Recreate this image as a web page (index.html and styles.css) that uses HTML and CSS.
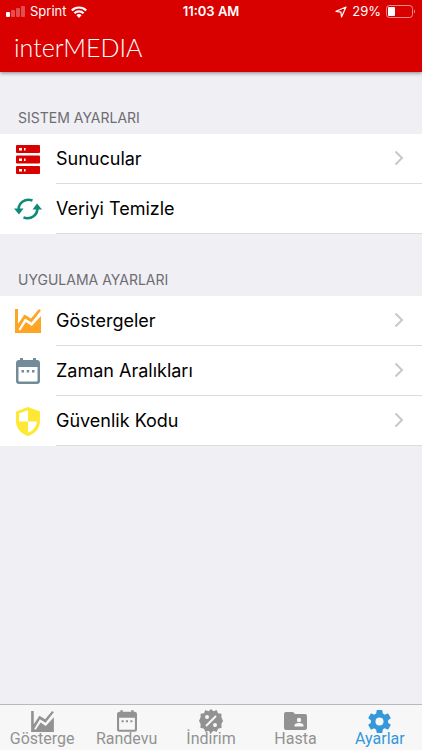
FILE: index.html
```html
<!DOCTYPE html>
<html lang="tr">
<head>
<meta charset="utf-8">
<meta name="viewport" content="width=device-width, initial-scale=1">
<title>interMEDIA</title>
<link rel="stylesheet" href="styles.css">
</head>
<body>
<svg class="defs" aria-hidden="true">
  <symbol id="chart" viewBox="0 0 26 24">
    <path d="M0 0h3v15L9.500 5.500l6.500 4L24 0l2 1.500L16.500 13.500l-6.500-4L3.500 20.500l1.800 1L10.800 13l6 4L26 7v17H0z" fill="currentColor"/>
  </symbol>
  <symbol id="calendar" viewBox="0 0 24 26">
    <path fill="currentColor" fill-rule="evenodd" d="M4 0h3v2h10V0h3v2h1a3 3 0 0 1 3 3v18a3 3 0 0 1-3 3H3a3 3 0 0 1-3-3V5a3 3 0 0 1 3-3h1zM2.500 9v13.500a1 1 0 0 0 1 1h17a1 1 0 0 0 1-1V9zM5.500 12H8v2.500H5.500zM10.700 12h2.500v2.500h-2.500zM16 12h2.500v2.500H16z"/>
  </symbol>
  <symbol id="chevron" viewBox="0 0 10 16">
    <path d="M1.500 1.500 8 8l-6.500 6.500" fill="none" stroke="currentColor" stroke-width="2"/>
  </symbol>
</svg>
<div class="app">
  <header class="header">
    <div class="status">
      <div class="status-side">
        <svg class="signal" viewBox="0 0 19 11"><g fill="#fff"><rect y="6" width="4" height="5" rx="1"/><g opacity=".3"><rect x="5" y="4" width="4" height="7" rx="1"/><rect x="10" y="2" width="4" height="9" rx="1"/><rect x="15" width="4" height="11" rx="1"/></g></g></svg>
        <span>Sprint</span>
        <svg class="wifi" viewBox="0 0 16 12"><g fill="none" stroke="#fff" stroke-width="2.200"><path d="M.8 4.500a10.200 10.200 0 0 1 14.400 0"/><path d="M3.400 7.200a6.500 6.500 0 0 1 9.200 0"/></g><path fill="#fff" d="M5.400 9.300a3.700 3.700 0 0 1 5.200 0L8 12z"/></svg>
      </div>
      <span class="clock">11:03 AM</span>
      <div class="status-side status-end">
        <svg class="arrow" viewBox="0 0 12 12"><path d="M1 5.300 11 1 6.500 11 6 6.200z" fill="none" stroke="#fff" stroke-width="1.200" stroke-linejoin="round"/></svg>
        <span>29%</span>
        <svg class="battery" viewBox="0 0 30 13"><rect x=".5" y=".5" width="26" height="12" rx="3" fill="none" stroke="#fff" opacity=".55"/><rect x="2" y="2" width="7" height="9" rx="1" fill="#fff"/><path d="M28 4.500q2 2 0 4z" fill="#fff" opacity=".6"/></svg>
      </div>
    </div>
    <h1 class="brand">interMEDIA</h1>
  </header>

  <main class="content">
    <section>
      <h2 class="group-title">SISTEM AYARLARI</h2>
      <ul class="group">
        <li><a class="row" href="#sunucular">
          <span class="row-icon server"><svg width="24" height="29" viewBox="0 0 24 29"><g fill="currentColor"><rect width="24" height="8" rx="1"/><rect y="10.500" width="24" height="8" rx="1"/><rect y="21" width="24" height="8" rx="1"/></g><g fill="#fff"><path d="M3 3h3v2.500H3zM8 3h1.500v2.500H8zM3 13.500h3V16H3zM8 13.500h1.500V16H8zM3 24h3v2.500H3zM8 24h1.500v2.500H8z"/></g></svg></span>
          <span class="row-body"><span>Sunucular</span><svg class="chevron"><use href="#chevron"/></svg></span></a></li>
        <li><a class="row" href="#temizle">
          <span class="row-icon refresh"><svg width="28" height="22" viewBox="0 0 28 22"><path d="M4.700 12C4.200 5.500 10.500-.2 18.500 2.400M23.300 10C23.800 16.500 17.500 22.200 9.500 19.600" fill="none" stroke="currentColor" stroke-width="2.600"/><path d="M0 10.500h9.500L5 16.500zM18.500 11.500H28L23 5.500z" fill="currentColor"/></svg></span>
          <span class="row-body"><span>Veriyi Temizle</span></span></a></li>
      </ul>
    </section>
    <section>
      <h2 class="group-title">UYGULAMA AYARLARI</h2>
      <ul class="group">
        <li><a class="row" href="#gostergeler">
          <span class="row-icon orange"><svg width="26" height="24"><use href="#chart"/></svg></span>
          <span class="row-body"><span>Göstergeler</span><svg class="chevron"><use href="#chevron"/></svg></span></a></li>
        <li><a class="row" href="#zaman">
          <span class="row-icon slate"><svg width="24" height="26"><use href="#calendar"/></svg></span>
          <span class="row-body"><span>Zaman Aralıkları</span><svg class="chevron"><use href="#chevron"/></svg></span></a></li>
        <li><a class="row" href="#guvenlik">
          <span class="row-icon yellow"><svg width="24" height="29" viewBox="0 0 24 29"><path fill="currentColor" d="M12 0 24 4.500V14c0 7-5 13-12 15C5 27 0 21 0 14V4.500z"/><path fill="#fff" d="M12 3.200V14.500H3V6.500zM12 14.500h9c-.5 5-4 9.500-9 11.300z"/></svg></span>
          <span class="row-body"><span>Güvenlik Kodu</span><svg class="chevron"><use href="#chevron"/></svg></span></a></li>
      </ul>
    </section>
  </main>

  <nav class="tabs">
    <a class="tab" href="#gosterge"><span class="tab-icon"><svg width="23" height="21"><use href="#chart"/></svg></span><span>Gösterge</span></a>
    <a class="tab" href="#randevu"><span class="tab-icon"><svg width="20" height="22"><use href="#calendar"/></svg></span><span>Randevu</span></a>
    <a class="tab" href="#indirim"><span class="tab-icon"><svg width="24" height="24" viewBox="0 0 24 24"><path fill="currentColor" d="m12 0 2.500 2.200L17.700 1l1.300 3.200 3.400.6v3.400L24 12l-1.600 3 .2 3.700-3.600 1-1.300 3.300-3.200-1.200L12 24l-2.500-2.200L6.300 23 5 19.700l-3.600-1L1.600 15 0 12l1.600-3.800V4.800L5 4.200 6.300 1l3.200 1.200z"/><path stroke="#f7f7f7" stroke-width="2" d="m7 17 10-10"/><g fill="#f7f7f7"><circle cx="8" cy="8" r="2"/><circle cx="16" cy="16" r="2"/></g></svg></span><span>İndirim</span></a>
    <a class="tab" href="#hasta"><span class="tab-icon"><svg width="23" height="18" viewBox="0 0 23 18"><path fill="currentColor" d="M2 0h7l2 2h10a2 2 0 0 1 2 2v12a2 2 0 0 1-2 2H2a2 2 0 0 1-2-2V2a2 2 0 0 1 2-2z"/><g fill="#f7f7f7"><circle cx="15" cy="8" r="2.200"/><path d="M10.500 14.500v-1c0-3.200 9-3.200 9 0v1z"/></g></svg></span><span>Hasta</span></a>
    <a class="tab active" href="#ayarlar" aria-current="page"><span class="tab-icon"><svg width="23" height="23" viewBox="2 2 20 20"><path fill="currentColor" d="M19.430 12.980c.04-.32.07-.64.07-.98s-.03-.66-.07-.98l2.110-1.650c.19-.15.24-.42.12-.64l-2-3.460c-.12-.22-.39-.3-.61-.22l-2.490 1c-.52-.4-1.080-.73-1.690-.98l-.38-2.650C14.460 2.180 14.250 2 14 2h-4c-.25 0-.46.18-.49.42l-.38 2.650c-.61.25-1.170.59-1.690.98l-2.490-1c-.23-.09-.49 0-.61.22l-2 3.460c-.13.22-.07.49.12.64l2.110 1.650c-.04.32-.07.65-.07.98s.03.66.07.98l-2.110 1.650c-.19.15-.24.42-.12.64l2 3.460c.12.22.39.3.61.22l2.490-1c.52.4 1.080.73 1.690.98l.38 2.650c.03.24.24.42.49.42h4c.25 0 .46-.18.49-.42l.38-2.650c.61-.25 1.170-.59 1.690-.98l2.490 1c.23.09.49 0 .61-.22l2-3.460c.12-.22.07-.49-.12-.64zM12 15.500a3.500 3.500 0 1 1 0-7 3.500 3.500 0 0 1 0 7z"/></svg></span><span>Ayarlar</span></a>
  </nav>
</div>
</body>
</html>
```
FILE: styles.css
```css
* { box-sizing: border-box; }
body { margin: 0; background: #efeff4; font-family: Inter, sans-serif; color: #000; }
a { color: inherit; text-decoration: none; }
h1, h2, ul { margin: 0; padding: 0; font-weight: 400; }
ul { list-style: none; }
svg { display: block; flex: none; }
.defs { position: absolute; width: 0; height: 0; }
.app { min-height: 100vh; display: flex; flex-direction: column; }

.header { height: 72px; background: #d90000; color: #fff; box-shadow: 0 1px 4px rgba(0, 0, 0, .45); }
.status { display: flex; align-items: center; height: 23px; padding: 0 6px; font-size: 13px; line-height: 23px; }
.status-side { flex: 1; display: flex; align-items: center; gap: 5px; }
.status-end { justify-content: flex-end; }
.clock { font-weight: 600; }
.signal { width: 19px; height: 11px; }
.wifi { width: 16px; height: 12px; }
.arrow { width: 12px; height: 12px; }
.battery { width: 30px; height: 13px; }
.brand { padding: 0 14px; font: 300 25px/49px Lato, sans-serif; }

.content { flex: 1; }
.group-title { height: 62px; padding: 37px 18px 0; font-size: 14px; line-height: 18px; color: #6d6d72; }
.group { background: #fff; }
.row { display: flex; height: 50px; }
.row-icon { width: 56px; display: flex; align-items: center; justify-content: center; }
.row-body { flex: 1; display: flex; align-items: center; justify-content: space-between; padding-right: 18px; padding-bottom: 1px; border-bottom: 1px solid #dcdcde; font-size: 18px; }
.chevron { width: 10px; height: 16px; color: #c7c7cc; }
.server { color: #d90000; }
.refresh { color: #0e8a79; }
.orange { color: #ffa524; }
.slate { color: #748c9a; }
.yellow { color: #ffe833; }

.tabs { display: flex; height: 46px; background: #f7f7f7; border-top: 1px solid #b9b9bd; }
.tab { flex: 1; display: flex; flex-direction: column; align-items: center; padding-top: 4px; color: #929292; font-family: Roboto, sans-serif; font-size: 16px; line-height: 12px; }
.tab-icon { height: 24px; display: flex; align-items: center; }
.active { color: #3498db; }
```
